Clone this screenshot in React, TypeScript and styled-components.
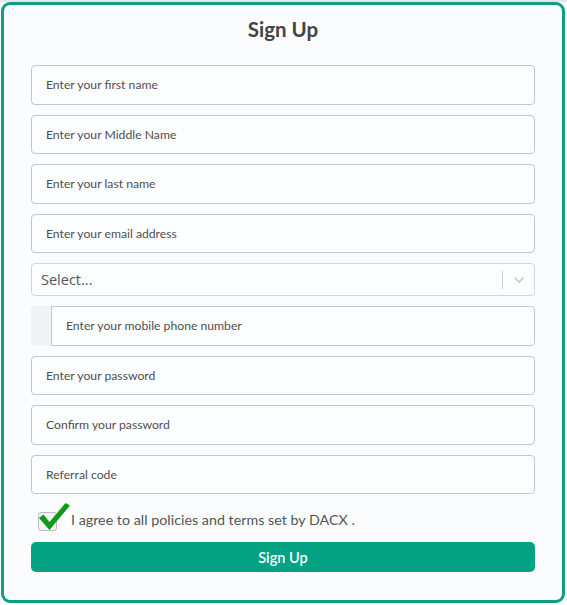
import React from "react";
import styled, { createGlobalStyle } from "styled-components";

const Global = createGlobalStyle`
  html, body { margin: 0; padding: 0; background: #ffffff; }
  body { font-family: "Lato", "Noto Sans", sans-serif; }
  * { box-sizing: border-box; }
`;

const TopStrip = styled.div`
  height: 2px;
  background: #e4e6ea;
`;

const Card = styled.form`
  margin: 0 2px 0 1px;
  height: 601px;
  border: 3px solid #0c9f84;
  border-radius: 9px;
  background: #fafcfe;
  padding: 11px 27px 0 27px;
  display: flex;
  flex-direction: column;
`;

const Title = styled.h2`
  margin: 0 0 23px 0;
  height: 26px;
  text-align: center;
  font-family: "Lato", sans-serif;
  font-weight: 700;
  font-size: 20.5px;
  line-height: 26px;
  color: #434343;
`;

const Fields = styled.div`
  display: flex;
  flex-direction: column;
  gap: 10px;
`;

const Input = styled.input`
  width: 100%;
  height: 39.5px;
  border: 1px solid #c3c5c9;
  border-radius: 4px;
  background: #fcfdfe;
  padding: 0 14px;
  font-family: "Lato", sans-serif;
  font-size: 12.2px;
  color: #333;
  outline: none;
  &::placeholder { color: #4f4f4f; }
`;

const SelectBox = styled.div`
  height: 33px;
  border: 1px solid #d2d4d8;
  border-radius: 4px;
  background: #fcfdfe;
  display: flex;
  align-items: center;
`;

const SelectValue = styled.div`
  flex: 1;
  padding-left: 9px;
  font-family: "Open Sans", sans-serif;
  font-size: 14.5px;
  color: #555;
`;

const Separator = styled.span`
  width: 1px;
  height: 18px;
  background: #cfd0d3;
`;

const Chevron = styled.span`
  width: 31px;
  display: flex;
  justify-content: center;
  align-items: center;
  color: #c8c8c8;
`;

const PhoneRow = styled.div`
  display: flex;
  height: 39.5px;
`;

const Flag = styled.div`
  width: 20px;
  background: #f0f2f5;
  border-radius: 4px 0 0 4px;
`;

const PhoneInput = styled(Input)`
  flex: 1;
  height: 100%;
  border-radius: 0 4px 4px 0;
`;

const AgreeRow = styled.label`
  display: flex;
  align-items: center;
  gap: 14px;
  height: 26px;
  margin: 12px 0 10px 7px;
  font-family: "Lato", sans-serif;
  font-size: 14.3px;
  color: #555;
`;

const CheckWrap = styled.span`
  position: relative;
  width: 19px;
  height: 19px;
  margin-top: 4px;
  border: 1px solid #b9bcc0;
  border-radius: 3px;
  background: #f4f5f7;
  flex-shrink: 0;
`;

const CheckMark = styled.svg`
  position: absolute;
  left: -2px;
  top: -13px;
`;

const Button = styled.button`
  height: 30px;
  border: none;
  border-radius: 5px;
  background: #02a283;
  color: #ffffff;
  font-family: "Lato", sans-serif;
  font-weight: 600;
  font-size: 14.5px;
`;

export default function App() {
  return (
    <>
      <Global />
      <TopStrip />
      <Card onSubmit={(e) => e.preventDefault()}>
        <Title>Sign Up</Title>
        <Fields>
          <Input placeholder="Enter your first name" />
          <Input placeholder="Enter your Middle Name" />
          <Input placeholder="Enter your last name" />
          <Input placeholder="Enter your email address" />
          <SelectBox>
            <SelectValue>Select...</SelectValue>
            <Separator />
            <Chevron>
              <svg width="12" height="8" viewBox="0 0 12 8">
                <path d="M1.5 1.5 L6 6 L10.5 1.5" fill="none" stroke="currentColor" strokeWidth="1.6" />
              </svg>
            </Chevron>
          </SelectBox>
          <PhoneRow>
            <Flag />
            <PhoneInput placeholder="Enter your mobile phone number" />
          </PhoneRow>
          <Input type="password" placeholder="Enter your password" />
          <Input type="password" placeholder="Confirm your password" />
          <Input placeholder="Referral code" />
        </Fields>
        <AgreeRow>
          <CheckWrap>
            <CheckMark width="34" height="32" viewBox="0 0 34 32">
              <path d="M2 18 L6.5 14.5 L12.5 22 L28.5 3 L33 5.5 L12.5 30 Z" fill="#0f9a1a" />
            </CheckMark>
          </CheckWrap>
          I agree to all policies and terms set by DACX .
        </AgreeRow>
        <Button type="submit">Sign Up</Button>
      </Card>
    </>
  );
}
